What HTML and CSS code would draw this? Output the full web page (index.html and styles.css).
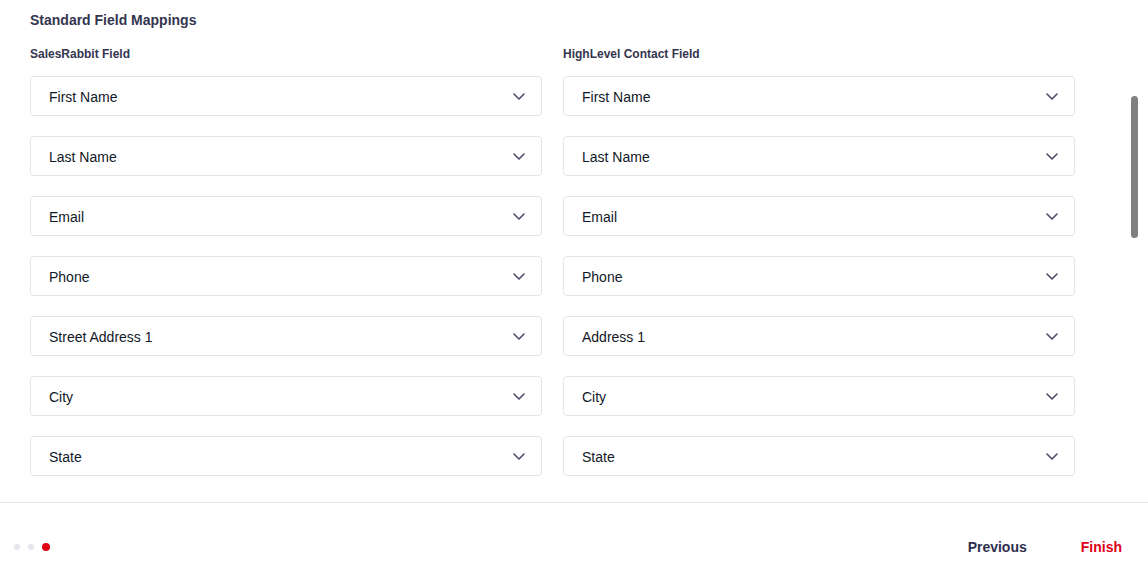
FILE: index.html
```html
<!DOCTYPE html>
<html lang="en">
<head>
<meta charset="utf-8">
<title>Standard Field Mappings</title>
<link rel="stylesheet" href="styles.css">
</head>
<body>
<div class="page">
  <main class="content">
    <h2 class="title">Standard Field Mappings</h2>
    <div class="labels">
      <div class="col-label">SalesRabbit Field</div>
      <div class="col-label">HighLevel Contact Field</div>
    </div>
    <div class="grid">
      <div class="select"><span>First Name</span><svg class="chev" viewBox="0 0 12 7"><path d="M1 1l5 5 5-5"/></svg></div>
      <div class="select"><span>First Name</span><svg class="chev" viewBox="0 0 12 7"><path d="M1 1l5 5 5-5"/></svg></div>
      <div class="select"><span>Last Name</span><svg class="chev" viewBox="0 0 12 7"><path d="M1 1l5 5 5-5"/></svg></div>
      <div class="select"><span>Last Name</span><svg class="chev" viewBox="0 0 12 7"><path d="M1 1l5 5 5-5"/></svg></div>
      <div class="select"><span>Email</span><svg class="chev" viewBox="0 0 12 7"><path d="M1 1l5 5 5-5"/></svg></div>
      <div class="select"><span>Email</span><svg class="chev" viewBox="0 0 12 7"><path d="M1 1l5 5 5-5"/></svg></div>
      <div class="select"><span>Phone</span><svg class="chev" viewBox="0 0 12 7"><path d="M1 1l5 5 5-5"/></svg></div>
      <div class="select"><span>Phone</span><svg class="chev" viewBox="0 0 12 7"><path d="M1 1l5 5 5-5"/></svg></div>
      <div class="select"><span>Street Address 1</span><svg class="chev" viewBox="0 0 12 7"><path d="M1 1l5 5 5-5"/></svg></div>
      <div class="select"><span>Address 1</span><svg class="chev" viewBox="0 0 12 7"><path d="M1 1l5 5 5-5"/></svg></div>
      <div class="select"><span>City</span><svg class="chev" viewBox="0 0 12 7"><path d="M1 1l5 5 5-5"/></svg></div>
      <div class="select"><span>City</span><svg class="chev" viewBox="0 0 12 7"><path d="M1 1l5 5 5-5"/></svg></div>
      <div class="select"><span>State</span><svg class="chev" viewBox="0 0 12 7"><path d="M1 1l5 5 5-5"/></svg></div>
      <div class="select"><span>State</span><svg class="chev" viewBox="0 0 12 7"><path d="M1 1l5 5 5-5"/></svg></div>
    </div>
  </main>
  <div class="scroll-thumb"></div>
  <footer class="footer">
    <div class="dots">
      <span class="dot"></span>
      <span class="dot"></span>
      <span class="dot active"></span>
    </div>
    <div class="actions">
      <button class="btn btn-prev">Previous</button>
      <button class="btn btn-finish">Finish</button>
    </div>
  </footer>
</div>
</body>
</html>
```

FILE: styles.css
```css
* { box-sizing: border-box; }
html, body { margin: 0; padding: 0; background: #fff; }
body {
  font-family: "Liberation Sans", Arial, Helvetica, sans-serif;
  color: #111827;
}
.page {
  position: relative;
  width: 1148px;
  height: 578px;
  overflow: hidden;
}
.content {
  height: 502px;
  padding: 12px 0 0 30px;
  overflow: hidden;
}
.title {
  margin: 0;
  font-size: 14px;
  line-height: 16px;
  font-weight: 700;
  color: #34354f;
}
.labels {
  display: grid;
  grid-template-columns: 512px 512px;
  column-gap: 21px;
  margin-top: 19px;
  margin-bottom: 15px;
}
.col-label {
  font-size: 12px;
  line-height: 14px;
  font-weight: 700;
  color: #34354f;
}
.grid {
  display: grid;
  grid-template-columns: 512px 512px;
  column-gap: 21px;
  row-gap: 20px;
}
.select {
  height: 40px;
  border: 1px solid #e4e5e9;
  border-radius: 4px;
  display: flex;
  align-items: center;
  justify-content: space-between;
  padding: 1px 16px 0 18px;
  font-size: 14px;
  color: #111827;
  background: #fff;
}
.chev {
  width: 12px;
  height: 7px;
  fill: none;
  stroke: #4b4c68;
  stroke-width: 1.6;
  stroke-linecap: round;
  stroke-linejoin: round;
}
.scroll-thumb {
  position: absolute;
  left: 1131px;
  top: 96px;
  width: 7px;
  height: 142px;
  border-radius: 4px;
  background: #808080;
}
.footer {
  height: 76px;
  border-top: 1px solid #e6e6e6;
  display: flex;
  align-items: center;
  justify-content: space-between;
  padding: 13px 26px 0 14px;
}
.dots {
  display: flex;
  align-items: center;
  gap: 8px;
}
.dot {
  width: 6px;
  height: 6px;
  border-radius: 50%;
  background: #e5e6eb;
}
.dot.active {
  width: 8px;
  height: 8px;
  background: #e00016;
}
.actions {
  display: flex;
  align-items: center;
  gap: 54px;
}
.btn {
  border: 0;
  background: none;
  padding: 0;
  font-family: inherit;
  font-size: 14px;
  font-weight: 700;
  cursor: pointer;
}
.btn-prev { color: #2e2f4d; }
.btn-finish { color: #e00016; }
```
